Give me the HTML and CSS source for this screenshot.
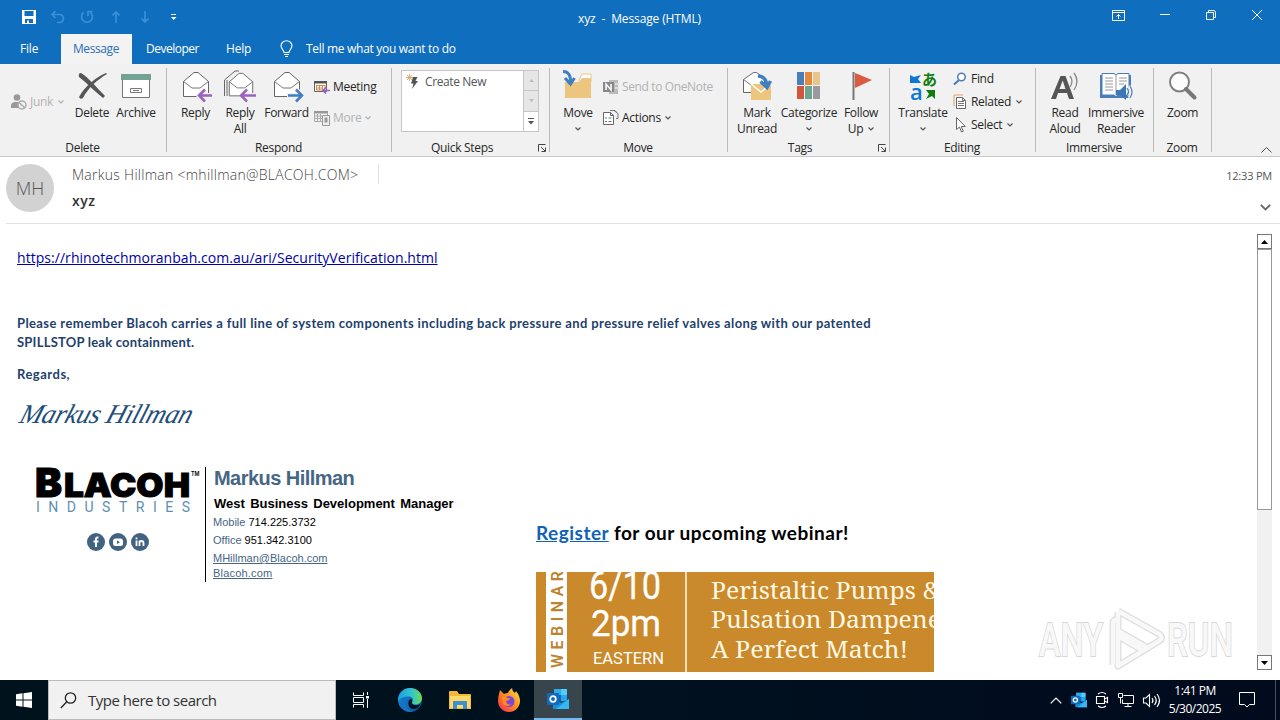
FILE: index.html
```html
<!DOCTYPE html>
<html lang="en">
<head>
<meta charset="utf-8">
<title>xyz - Message (HTML)</title>
<link rel="stylesheet" href="styles.css">
</head>
<body>
<svg class="defs" width="0" height="0">
  <symbol id="chev" viewBox="0 0 6 4"><path d="M.5.5 3 3 5.500.5" fill="none" stroke="currentColor" stroke-width="1.2"/></symbol>
  <symbol id="launch" viewBox="0 0 8 8"><path d="M.5 7.500V.5H7.500M3 3l4 4M7.500 3.500v4h-4" fill="none" stroke="#444"/></symbol>
  <symbol id="env" viewBox="0 0 32 32"><path d="M3.500 11.500v15h25v-15L18 2.500h-4z" fill="#fff" stroke="#666"/><path d="M3.500 11.500 12 18h8l8.500-6.500" fill="none" stroke="#777"/></symbol>
  <symbol id="outlook" viewBox="0 0 22 22"><path d="M7 1h13v12H7z" fill="#1066b5"/><path d="M7 1h7v6H7z" fill="#32a9e8"/><path d="M14 1h6v6h-6z" fill="#50d0f8"/><path d="M14 7h6v6h-6z" fill="#28a8ea"/><path d="M6 12l8 3 8-4v10H6z" fill="#1490df"/><path d="M22 11v10H9z" fill="#35b8f1"/><rect y="5" width="12" height="12" rx="1" fill="#0f6cbd"/><circle cx="6" cy="11" r="2.800" fill="none" stroke="#fff" stroke-width="1.700"/></symbol>
</svg>

<header class="titlebar">
  <div class="quick">
    <svg width="16" height="16" viewBox="0 0 16 16"><path d="M1 1h14v14H1z" fill="#fff"/><path d="M3.500 2h9v5h-9zM4 10h8v4H4z" fill="#106ebe"/><path d="M6 11.500h2V14H6z" fill="#fff"/></svg>
    <svg class="dim" width="16" height="16" viewBox="0 0 16 16"><path d="M5.500 2 2 5.500 5.500 9M2 5.500h7.500a4 4 0 0 1 0 8H7"/></svg>
    <svg class="dim" width="16" height="16" viewBox="0 0 16 16"><path d="M4.500 3.500A5.500 5.500 0 1 0 11.500 3.500M13.500 2.500H9V7"/></svg>
    <svg class="dim" width="16" height="16" viewBox="0 0 16 16"><path d="M8 14V3M4.500 6.500 8 3l3.500 3.500"/></svg>
    <svg class="dim" width="16" height="16" viewBox="0 0 16 16"><path d="M8 2v11M4.500 9.500 8 13l3.500-3.500"/></svg>
    <svg width="16" height="16" viewBox="0 0 16 16"><path d="M5 5.500h5" stroke="#fff"/><path d="M5 8h5.500L7.700 11z" fill="#fff"/></svg>
  </div>
  <div class="title">xyz&nbsp; - &nbsp;Message (HTML)</div>
  <div class="controls">
    <svg width="13" height="11" viewBox="0 0 13 11"><path d="M.5.5h12v10H.5zM.5 2.500h12M6.500 9V4.500M4.500 6.500l2-2 2 2"/></svg>
    <svg width="10" height="11" viewBox="0 0 10 11"><path d="M-1 4.500h10"/></svg>
    <svg width="10" height="11" viewBox="0 0 10 11"><path d="M.5 2.500h7v7h-7zM2.500 2.500v-2h5q2 0 2 2v5h-2"/></svg>
    <svg width="11" height="11" viewBox="0 0 11 11"><path d="M0 0l10 10M10 0L0 10"/></svg>
  </div>
</header>

<nav class="tabs">
  <span class="tab file">File</span>
  <span class="tab active">Message</span>
  <span class="tab dev">Developer</span>
  <span class="tab help">Help</span>
  <svg class="bulb" width="13" height="18" viewBox="0 0 13 18"><path d="M4 12.500C4 10 1 9 1 5.800a5.500 5 0 0 1 11 0C12 9 9 10 9 12.500zM4 14.500h5M5 16.500h3" fill="none" stroke="#fff" stroke-width="1.100"/></svg>
  <span class="tell">Tell me what you want to do</span>
</nav>

<section class="ribbon">
  <div class="group g-delete">
    <div class="tools">
      <div class="junk disabled"><svg width="16" height="16" viewBox="0 0 16 16"><circle cx="6" cy="3.500" r="3.300" fill="#999"/><path d="M0 14V11q1-3 4-3h4v6z" fill="#999"/><circle cx="11" cy="11" r="4" fill="#f1f1f1" stroke="#aaa" stroke-width="1.500"/><path d="M8 8.500l6 5.500" stroke="#aaa" stroke-width="1.500"/></svg><span>Junk</span><svg class="chev" width="6" height="4"><use href="#chev"/></svg></div>
      <div class="big w44"><svg width="32" height="32" viewBox="0 0 32 32"><path d="M5 3c7 4 15 14 24 23l-2 2C18 21 11 13 3 7q-1-4 2-4z" fill="#555"/><path d="M31 4C21 10 12 18 7 28q-3 2-4-1C9 16 20 7 30 3z" fill="#555"/></svg><span>Delete</span></div>
      <div class="big w44"><svg width="32" height="32" viewBox="0 0 32 32"><path d="M2.500 8.500h27v19h-27z" fill="#fff" stroke="#777"/><path d="M1 4h30v6H1z" fill="#72a394"/><path d="M10.500 18.500h11v4h-11z" fill="#fff" stroke="#777"/><path d="M13 20.500h6" stroke="#777"/></svg><span>Archive</span></div>
    </div>
    <div class="caption">Delete</div>
  </div>
  <div class="group g-respond">
    <div class="tools">
      <div class="big w45"><svg width="32" height="32" viewBox="0 0 32 32"><use href="#env" width="32" height="32"/><path d="M33 25.500H20M25 19.500l-6 6 6 6" fill="none" stroke="#f1f1f1" stroke-width="5"/><path d="M32 25.500H19.500M25 19.500l-6 6 6 6" fill="none" stroke="#9a63bd" stroke-width="2.500"/></svg><span>Reply</span></div>
      <div class="big w44"><svg width="32" height="32" viewBox="0 0 32 32"><path d="M.5 26V10L11 1h4M3 26V10" fill="none" stroke="#666"/><use href="#env" x="2" width="30" height="32"/><path d="M33 25.500H20M25 19.500l-6 6 6 6" fill="none" stroke="#f1f1f1" stroke-width="5"/><path d="M32 25.500H17.500M23 19.500l-6 6 6 6" fill="none" stroke="#9a63bd" stroke-width="2.500"/></svg><span>Reply<br>All</span></div>
      <div class="big w49 fwd"><svg width="32" height="32" viewBox="0 0 32 32"><use href="#env" width="32" height="32"/><path d="M16 25.500H29M25 19.500l6 6-6 6" fill="none" stroke="#f1f1f1" stroke-width="5"/><path d="M17 25.500H30M25 19.500l6 6-6 6" fill="none" stroke="#3f7fc1" stroke-width="2.500"/></svg><span>Forward</span></div>
      <div class="smalls two">
        <div class="small"><svg width="16" height="14" viewBox="0 0 16 14"><path d="M.5 1.500h12v10H.5z" fill="#fff" stroke="#666"/><path d="M0 1h13v2.500H0z" fill="#555"/><path d="M2.500 5v5M5.500 5v5M8.500 5v5M11 5v3M2 5.500h9M2 8h7M2 10h6" stroke="#d08a4d"/><path d="M16 10.500H9M12 7.500l-3 3 3 3" fill="none" stroke="#9a63bd" stroke-width="1.700"/></svg><span>Meeting</span></div>
        <div class="small disabled"><svg width="16" height="16" viewBox="0 0 16 16"><path d="M.5 2.500h13v9H.5zM3.500 4v7M6.500 4v7M1 6h7M1 8.500h7" fill="none" stroke="#aaa"/><path d="M0 1h14v2.500H0z" fill="#999"/><path d="M8.500 5.500h7v10h-7z" fill="#eee" stroke="#999"/><path d="M10.500 7.500h3v5h-3z" fill="#999"/></svg><span>More</span><svg class="chev" width="6" height="4"><use href="#chev"/></svg></div>
      </div>
    </div>
    <div class="caption">Respond</div>
  </div>
  <div class="group g-quick">
    <div class="tools">
      <div class="gallery">
        <div class="step"><svg width="14" height="16" viewBox="0 0 14 16"><path d="M3.500 0v7M0 3.500h7M1 1l5 5M6 1 1 6" stroke="#dba968" stroke-width=".9"/><path d="M7 3h4.500L9.500 7H12l-6 8 1.500-5.500H5z" fill="#555"/></svg><span>Create New</span></div>
        <div class="spin"><i class="off"><svg width="5" height="3" viewBox="0 0 5 3"><path d="M0 3 2.500 0 5 3z" fill="#bbb"/></svg></i><i class="off"><svg width="5" height="3" viewBox="0 0 5 3"><path d="M0 0 2.500 3 5 0z" fill="#bbb"/></svg></i><i><svg width="6" height="7" viewBox="0 0 6 7"><path d="M0 .5h6" stroke="#555"/><path d="M0 3h6L3 6.500z" fill="#555"/></svg></i></div>
      </div>
    </div>
    <div class="caption">Quick Steps</div><svg class="launch" width="8" height="8"><use href="#launch"/></svg>
  </div>
  <div class="group g-move">
    <div class="tools">
      <div class="big w42"><svg width="32" height="32" viewBox="0 0 32 32"><path d="M17 10l3-6h9v8H17z" fill="#fff" stroke="#e9c580"/><path d="M3 12h14l3-4h9v20H3z" fill="#ecc67f"/><path d="M1 1.500q8 0 7.500 11M3 8l5.500 6 4-6" fill="none" stroke="#3f7fc1" stroke-width="3"/></svg><span>Move</span><svg class="chev" width="6" height="4"><use href="#chev"/></svg></div>
      <div class="smalls two">
        <div class="small disabled"><svg width="16" height="16" viewBox="0 0 16 16"><path d="M6 1h9v14H6z" fill="#bbb"/><path d="M12 4h4v2h-4zM12 8h4v2h-4z" fill="#ddd"/><path d="M0 3h11v10H0z" fill="#888"/><path d="M3 11V5l5 6V5" fill="none" stroke="#fff" stroke-width="1.500"/></svg><span class="onenote">Send to OneNote</span></div>
        <div class="small"><svg width="16" height="16" viewBox="0 0 16 16"><path d="M.5 2.500h7l3 3v9H.5zM7.500 2.500v3h3" fill="#fff" stroke="#666"/><path d="M2 8h2M2 11.500h2M5.500 8h3M5.500 11.500h3M7 .5h4q2 0 2.500 2M11 .5l4 3v5h-2" fill="none" stroke="#777"/></svg><span>Actions</span><svg class="chev" width="6" height="4"><use href="#chev"/></svg></div>
      </div>
    </div>
    <div class="caption">Move</div>
  </div>
  <div class="group g-tags">
    <div class="tools">
      <div class="big w44"><svg width="32" height="32" viewBox="0 0 32 32"><path d="M2.500 22.500v-13l10-7h3l8 6v14z" fill="#fff" stroke="#666"/><path d="M2.500 9.500l8 6h6" fill="none" stroke="#777"/><path d="M10 14h20v16H10z" fill="#ecc67f"/><path d="M10 14l10 8 10-8" fill="none" stroke="#fff" stroke-width="1.500"/><path d="M17 6q8 0 9 10M19.500 11.500l6.500 6 3.500-6.500" fill="none" stroke="#3f7fc1" stroke-width="3.500"/></svg><span>Mark<br>Unread</span></div>
      <div class="big w60"><svg width="32" height="32" viewBox="0 0 32 32"><path d="M4 2h7v13H4z" fill="#4a7ebb"/><path d="M12 2h7v13h-7z" fill="#e58a3c"/><path d="M20 2h7v13h-7z" fill="#e8c68b"/><path d="M4 16h7v13H4z" fill="#d2553e"/><path d="M12 16h7v13h-7z" fill="#6ba592"/><path d="M20 16h7v13h-7z" fill="#9a9a9e"/></svg><span>Categorize</span><svg class="chev" width="6" height="4"><use href="#chev"/></svg></div>
      <div class="big w44"><svg width="32" height="32" viewBox="0 0 32 32"><path d="M8.500 2v28" stroke="#777" stroke-width="2"/><path d="M10 3l17 7-17 8z" fill="#dc5a42"/></svg><span>Follow<br>Up <svg class="chev in" width="6" height="4"><use href="#chev"/></svg></span></div>
    </div>
    <div class="caption">Tags</div><svg class="launch" width="8" height="8"><use href="#launch"/></svg>
  </div>
  <div class="group g-edit">
    <div class="tools">
      <div class="big w48"><div class="translate"><b>a</b><em>あ</em><svg width="32" height="32" viewBox="0 0 32 32"><path d="M3 5l4 2 7-2-3 4 3 4H3z" fill="#0c78d4"/><path d="M19 20h9v9l-3-3-6 3 3-5z" fill="#107c10"/></svg></div><span>Translate</span><svg class="chev" width="6" height="4"><use href="#chev"/></svg></div>
      <div class="smalls three">
        <div class="small"><svg width="14" height="14" viewBox="0 0 14 14"><circle cx="8.500" cy="5" r="3.800" fill="#fff" stroke="#4a7ebb" stroke-width="1.500"/><path d="M6 8l-5 4.500" stroke="#4a7ebb" stroke-width="2.200"/></svg><span>Find</span></div>
        <div class="small"><svg width="14" height="16" viewBox="0 0 14 16"><path d="M1 12V1h9" fill="none" stroke="#dfa46a"/><path d="M3.500 3.500h6l3 3v8h-9z" fill="#fff" stroke="#666"/><path d="M5 7.500h6M5 9.500h6M5 11.500h6M9.500 3.500v3h3" stroke="#777" fill="none"/></svg><span>Related</span><svg class="chev" width="6" height="4"><use href="#chev"/></svg></div>
        <div class="small"><svg width="14" height="16" viewBox="0 0 14 16"><path d="M3.500.5v12l3-2.500 2 5 1.800-.8-2-4.700h4z" fill="#fff" stroke="#666"/></svg><span>Select</span><svg class="chev" width="6" height="4"><use href="#chev"/></svg></div>
      </div>
    </div>
    <div class="caption">Editing</div>
  </div>
  <div class="group g-imm">
    <div class="tools">
      <div class="big w46"><svg width="32" height="32" viewBox="0 0 32 32"><path fill-rule="evenodd" d="M2 29 11.500 6h5L25 29h-5l-2-6H9l-2 6zM10.500 19h6L13.700 10.500z" fill="#555"/><path d="M21 6q4 5 0 11M25 3q6 8 0 17" fill="none" stroke="#888" stroke-width="1.300"/></svg><span>Read<br>Aloud</span></div>
      <div class="big w56"><svg width="32" height="32" viewBox="0 0 32 32"><path d="M0 5h31v23H0z" fill="#4a7ebb"/><path d="M2 3.500h12l2 1.500 2-1.500h11V25H18l-2 2-2-2H2z" fill="#fff" stroke="#4a7ebb"/><path d="M16 5v21M5 8h8M5 11h8M5 14h8M5 17h8M5 20h8M19 8h8M19 11h8M19 14h5" stroke="#999"/><path d="M16 20h4l6-6v16l-6-5h-4z" fill="#3d78b5"/><path d="M27 19q3 3 0 6M29 16q5 6 0 12" stroke="#f1f1f1" stroke-width="3" fill="none"/><path d="M27 18q3 4 0 7M30 16q4 6 0 12" stroke="#4a7ebb" stroke-width="1.200" fill="none"/></svg><span>Immersive<br>Reader</span></div>
    </div>
    <div class="caption">Immersive</div>
  </div>
  <div class="group g-zoom">
    <div class="tools">
      <div class="big w57"><svg width="32" height="32" viewBox="0 0 32 32"><circle cx="12.500" cy="12" r="9.500" fill="#fcfcfc" stroke="#808080" stroke-width="2"/><path d="M19 19l8.500 8.500" stroke="#777" stroke-width="4" stroke-linecap="round"/></svg><span>Zoom</span></div>
    </div>
    <div class="caption">Zoom</div>
  </div>
  <svg class="collapse" width="11" height="6" viewBox="0 0 11 6"><path d="M.5 5.500l5-5 5 5" fill="none" stroke="#555"/></svg>
</section>

<section class="head">
  <div class="avatar">MH</div>
  <div class="who"><div class="from"><span>Markus Hillman &lt;mhillman@BLACOH.COM&gt;</span></div><div class="subject">xyz</div></div>
  <div class="when"><span>12:33 PM</span><svg width="11" height="7" viewBox="0 0 11 7"><path d="M.8.8l4.700 4.700L10.200.8" fill="none" stroke="#666" stroke-width="1.800"/></svg></div>
</section>

<main class="message">
  <div class="content">
    <a class="link">https://rhinotechmoranbah.com.au/ari/SecurityVerification.html</a>
    <p class="note"><span class="l1">Please remember Blacoh carries a full line of system components including back pressure and pressure relief valves along with our patented</span><br><span class="l2">SPILLSTOP leak containment.</span></p>
    <p class="regards">Regards,</p>
    <div class="script">Markus Hillman</div>
    <div class="sig">
      <div class="brand">
        <svg width="170" height="50" viewBox="0 0 170 50">
          <g font-family="Inter" font-weight="900" stroke="#000" stroke-width="1"><text x="-1" y="30" font-size="40" textLength="27" lengthAdjust="spacingAndGlyphs">B</text><text x="28" y="30" font-size="33" textLength="126" lengthAdjust="spacingAndGlyphs">LACOH</text></g>
          <text x="155" y="9" font-family="Inter" font-size="6.500" font-weight="600" textLength="8.500" lengthAdjust="spacingAndGlyphs">TM</text>
          <text x="0" y="45" font-family="Roboto" font-size="14" fill="#5c8fb3" textLength="154">INDUSTRIES</text>
        </svg>
        <div class="social">
          <svg width="18" height="18" viewBox="0 0 18 18"><circle cx="9" cy="9" r="9" fill="#416280"/><path d="M11.500 4.500h-1Q9 4.500 9 6.200V14M6.500 8.500h5" fill="none" stroke="#fff" stroke-width="1.900"/></svg>
          <svg width="18" height="18" viewBox="0 0 18 18"><circle cx="9" cy="9" r="9" fill="#416280"/><rect x="4" y="5.500" width="10" height="7.500" rx="2.500" fill="#fff"/><path d="M8 7.500l3 1.700-3 1.700z" fill="#416280"/></svg>
          <svg width="18" height="18" viewBox="0 0 18 18"><circle cx="9" cy="9" r="9" fill="#416280"/><path d="M5.500 7.500V13M5.500 4.500v1.700M8.500 13V7.500M8.500 10q0-2 2-2t2 2v3" fill="none" stroke="#fff" stroke-width="1.800"/></svg>
        </div>
      </div>
      <div class="card">
        <div class="name">Markus Hillman</div>
        <div class="role">West Business Development Manager</div>
        <div class="row">Mobile <b>714.225.3732</b></div>
        <div class="row">Office <b>951.342.3100</b></div>
        <div class="row mail"><u>MHillman@Blacoh.com</u></div>
        <div class="row site"><u>Blacoh.com</u></div>
      </div>
      <div class="webinar">
        <div class="register"><u>Register</u> for our upcoming webinar!</div>
        <svg class="banner" width="398" height="100" viewBox="0 0 398 100">
          <path d="M0 0h398v100H0z" fill="#ca892a"/><path d="M10 0h21v100H10z" fill="#fff"/><path d="M150 0v100" stroke="#fff" stroke-width="1.400"/>
          <text transform="translate(27 96) rotate(-90)" font-family="Roboto" font-weight="600" font-size="16" fill="#bd842f" textLength="97">WEBINAR</text>
          <g fill="#fff" stroke="#fff" stroke-width=".3" font-family="Roboto"><text x="53" y="27" font-size="38" textLength="72" lengthAdjust="spacingAndGlyphs">6/10</text><text x="55" y="64" font-size="37" textLength="70" lengthAdjust="spacingAndGlyphs">2pm</text><text x="57" y="92" font-size="17" stroke="none" textLength="71" lengthAdjust="spacingAndGlyphs">EASTERN</text></g>
          <g fill="#fff8e4" font-family="'Noto Serif','DejaVu Serif'" font-size="24"><text x="175" y="27" textLength="205" lengthAdjust="spacingAndGlyphs">Peristaltic Pumps</text><text x="387" y="27">&amp;</text><text x="175" y="56" textLength="253" lengthAdjust="spacingAndGlyphs">Pulsation Dampeners</text><text x="175" y="86" textLength="197" lengthAdjust="spacingAndGlyphs">A Perfect Match!</text></g>
        </svg>
      </div>
    </div>
  </div>
  <div class="scroll"><i><svg width="7" height="4" viewBox="0 0 7 4"><path d="M0 4 3.500 0 7 4z"/></svg></i><div class="thumb"></div><i class="down"><svg width="7" height="4" viewBox="0 0 7 4"><path d="M0 0 3.500 4 7 0z"/></svg></i></div>
  <svg class="watermark" width="204" height="70" viewBox="0 0 204 70"><g fill="none" stroke-linejoin="round"><g stroke="#dcdcdc" stroke-width="7"><path d="M77 59V17q0-3 5-4v42M82 5l41 23q5 4 0 7L82 60V30l24 14M82 6v19l30 17"/></g><g stroke="#f8f8f8" stroke-width="4.500"><path d="M77 59V17q0-3 5-4v42M82 5l41 23q5 4 0 7L82 60V30l24 14M82 6v19l30 17"/></g></g><g font-family="Roboto" font-weight="500" font-size="46" fill="#f8f8f8" stroke="#d6d6d6" stroke-width="1.800" paint-order="stroke"><text x="3" y="50" textLength="64" lengthAdjust="spacingAndGlyphs">ANY</text><text x="131" y="50" textLength="66" lengthAdjust="spacingAndGlyphs">RUN</text></g></svg>
</main>

<footer class="taskbar">
  <div class="start"><svg width="16" height="16" viewBox="0 0 16 16"><path d="M0 2.200 6.500 1.300V7.500H0zM7.500 1.200 16 0v7.500H7.500zM0 8.500h6.500v6.200L0 13.800zM7.500 8.500H16V16l-8.500-1.200z" fill="#fff"/></svg></div>
  <div class="search"><svg width="17" height="17" viewBox="0 0 17 17"><circle cx="10.500" cy="6" r="5.200" fill="none" stroke="#222" stroke-width="1.300"/><path d="M6.800 9.800.8 16" stroke="#222" stroke-width="1.300"/></svg><span>Type here to search</span></div>
  <div class="app"><svg width="16" height="16" viewBox="0 0 16 16"><path d="M.5 3.500V.5M10.500 3.500V.5M.5 3.500h10M.5 5.500h10v5H.5zM.5 12.500h10M.5 15.500v-3M10.500 15.500v-3M14.500 0v3M14.500 7v9" stroke="#fff" fill="none"/><path d="M13 4h3v2.500h-3z" fill="#fff"/></svg></div>
  <div class="app edge"><svg width="24" height="24" viewBox="0 0 24 24"><defs><linearGradient id="e1" x2="1"><stop stop-color="#1e9be0"/><stop offset=".55" stop-color="#32c3d0"/><stop offset="1" stop-color="#6bdc50"/></linearGradient><linearGradient id="e2" y2="1"><stop stop-color="#1790dc"/><stop offset="1" stop-color="#0b4c9b"/></linearGradient></defs><circle cx="12" cy="12" r="12" fill="url(#e2)"/><path d="M0 11C1 4 6 0 12 0c7 0 12 5 12 10 0 4-3 6.500-6.500 6.500-3 0-4-1.500-3-3 1.500-3-1-5-4-5C6 8.500 1 10 0 14z" fill="url(#e1)"/><path d="M10 9c-5 4-3 13 5 14.600C8 25 2 20 2.500 14 3 10 6 8.500 10 9z" fill="#1473c4"/><path d="M13.500 15c1 2.500 6 3 9 1-1 3-4 5-7 5-5 0-7-7-3-10 2 0 2 2 1 4z" fill="#00131c"/></svg></div>
  <div class="app"><svg width="22" height="20" viewBox="0 0 22 20"><path d="M0 2q0-1 1-1h7l2 3h11q1 0 1 1v14H0z" fill="#f4b93b"/><path d="M1 6h20v12H1z" fill="#ffd968"/><path d="M4 11h14v8h-4v-4H8v4H4z" fill="#3c8fd4"/></svg></div>
  <div class="app"><svg width="24" height="24" viewBox="0 0 24 24"><defs><linearGradient id="f" x1="1" x2="0" y2="1"><stop stop-color="#ffe14a"/><stop offset=".5" stop-color="#ff8a1e"/><stop offset="1" stop-color="#f3205c"/></linearGradient></defs><path d="M2 6l1-4 4 4q2-1 4-1 1-3 4-5 0 3 3 5l1-2q4 5 4 10a11 11 0 0 1-22 0q0-4 1-7z" fill="url(#f)"/><circle cx="12" cy="13.500" r="5.500" fill="#7b45d8"/><path d="M5 9q4-1 5 1 3 0 3 1-2 2-4 2 1 5 6 3-5 4-9 0z" fill="#ff8a1e"/></svg></div>
  <div class="app current"><svg width="24" height="22"><use href="#outlook" width="24" height="22"/></svg></div>
  <div class="tray">
    <svg width="12" height="7" viewBox="0 0 12 7"><path d="M.7 6.300 6 1l5.300 5.300" fill="none" stroke="#fff" stroke-width="1.200"/></svg>
    <svg width="16" height="16"><use href="#outlook" width="16" height="16"/></svg>
    <svg width="14" height="18" viewBox="0 0 14 18"><path d="M3 3q4-3 8 0M3 15q4 3 8 0M1.500 5.500h8v7h-8zM9.500 8l3-1.500v5L9.500 10" fill="none" stroke="#fff" stroke-width="1.100"/></svg>
    <svg width="17" height="15" viewBox="0 0 17 15"><path d="M5.500 2.500h10v8H4.500v-4M10 10.500v3M6.500 13.500h7M.5.5h4v4h-4zM2.500 4.500v6" fill="none" stroke="#fff"/></svg>
    <svg width="17" height="15" viewBox="0 0 17 15"><path d="M.5 5h2.500l3.500-3.500v12L3 10H.5zM9 5q2 2.500 0 5M11.500 3q3.500 4.500 0 9M14 1q5 6.500 0 13" fill="none" stroke="#fff" stroke-width="1.100"/></svg>
  </div>
  <div class="clock"><span>1:41 PM</span><span class="date">5/30/2025</span></div>
  <svg class="bell" width="16" height="16" viewBox="0 0 16 16"><path d="M.5.500h15v12h-5L8 15l-2.500-2.500h-5z" fill="none" stroke="#fff"/></svg>
  <i class="desk"></i>
</footer>
</body>
</html>
```
FILE: styles.css
```css
* { box-sizing: border-box; }
body { margin: 0; width: 1280px; height: 720px; overflow: hidden; background: #fff; font: 12px/16px "Open Sans", "Noto Sans", sans-serif; color: #262626; display: flex; flex-direction: column; white-space: nowrap; }
svg { display: block; flex: none; overflow: visible; }
i { font-style: normal; }
p { margin: 0; }
.defs { position: absolute; }

.titlebar { height: 34px; flex: none; background: #106ebe; color: #fff; display: grid; grid-template-columns: 200px 1fr 200px; align-items: center; }
.quick { display: flex; gap: 13px; padding-left: 21px; }
.dim { fill: none; stroke: #3a8fd8; stroke-width: 1.700; }
.title { text-align: center; padding: 3px 1px 0 0; letter-spacing: -.13px; }
.controls { display: flex; justify-content: space-between; align-items: center; padding: 0 17px 4px 32px; fill: none; stroke: #fff; }

.tabs { height: 30px; flex: none; background: #106ebe; color: #fff; display: flex; align-items: stretch; line-height: 30px; }
.file { width: 61px; padding-left: 20px; letter-spacing: -.2px; }
.active { width: 71px; padding-right: 1px; text-align: center; background: #f3f3f3; color: #2a6fb5; letter-spacing: -.4px; }
.dev { width: 80px; padding-left: 14px; letter-spacing: -.5px; }
.help { width: 68px; padding-left: 14px; letter-spacing: -.2px; }
.bulb { margin-top: 6px; }
.tell { margin-left: 13px; letter-spacing: -.3px; }

.ribbon { height: 93px; flex: none; background: #f1f1f1; border-bottom: 1px solid #c8c8c8; display: flex; position: relative; letter-spacing: -.3px; }
.group { position: relative; height: 92px; display: flex; flex-direction: column; }
.group::after { content: ""; position: absolute; right: 0; top: 4px; width: 1px; height: 84px; background: #bbb; }
.tools { height: 76px; display: flex; align-items: flex-start; }
.caption { text-align: center; line-height: 16px; padding-right: 2px; }
.g-delete { width: 167px; }
.g-respond { width: 225px; }
.g-quick { width: 158px; }
.g-move { width: 178px; }
.g-tags { width: 162px; }
.g-edit { width: 146px; }
.g-imm { width: 118px; }
.g-zoom { width: 58px; }
.g-respond .tools { padding-left: 6px; }
.g-move .tools { padding-left: 7px; }
.g-tags .tools { padding-left: 7px; }
.g-edit .tools { padding-left: 9px; }
.g-imm .tools { padding-left: 6px; }
.g-quick .caption { padding-right: 18px; }
.g-tags .caption { padding-right: 18px; }
.big { display: flex; flex-direction: column; align-items: center; padding-top: 6px; text-align: center; }
.big > span { margin-top: 3px; }
.big > .chev { margin-top: 6px; }
.w42 { width: 42px; } .w44 { width: 44px; } .w45 { width: 45px; } .w46 { width: 46px; } .w48 { width: 48px; } .w49 { width: 49px; } .w56 { width: 56px; } .w57 { width: 57px; } .w60 { width: 60px; }
.chev { color: #555; }
.chev.in { display: inline-block; margin: 0 0 2px 2px; }
.junk { width: 70px; padding: 30px 0 0 11px; display: flex; align-items: center; gap: 3px; }
.junk .chev { margin-left: 2px; }
.disabled, .disabled .chev { color: #b1b1b1; }
.smalls { display: flex; flex-direction: column; padding-left: 5px; }
.small { display: flex; align-items: center; gap: 3px; height: 16px; }
.small .chev { margin-left: 1px; }
.two { padding-top: 15px; gap: 15px; }
.three { padding-top: 7px; gap: 7px; padding-left: 6px; }
.three .small { gap: 4px; }
.g-respond .two { padding-left: 3px; }
.g-move .two { padding-left: 4px; }
.onenote { letter-spacing: -.37px; }
.gallery { width: 138px; height: 62px; margin: 6px 0 0 9px; border: 1px solid #c6c6c6; background: #fff; display: flex; justify-content: space-between; }
.step { display: flex; gap: 5px; padding: 3px 0 0 4px; height: 20px; color: #555; letter-spacing: -.4px; }
.spin { width: 15px; border-left: 1px solid #c6c6c6; display: flex; flex-direction: column; }
.spin i { flex: 1; display: flex; align-items: center; justify-content: center; }
.spin .off { background: #e6e6e6; border-bottom: 1px solid #c6c6c6; }
.launch { position: absolute; right: 4px; bottom: 4px; }
.translate { position: relative; width: 32px; height: 32px; }
.translate b { position: absolute; left: 3px; top: 11px; font: 600 22px/20px "Open Sans", sans-serif; color: #0c78d4; }
.translate em { position: absolute; left: 15px; top: 1px; font: 700 15px/16px "Noto Sans CJK JP", sans-serif; color: #107c10; }
.collapse { position: absolute; right: 8px; bottom: 3px; }

.head { height: 67px; flex: none; margin: 0 0 0 6px; border-bottom: 1px solid #e1e1e1; display: flex; padding-top: 7px; }
.avatar { width: 48px; height: 48px; border-radius: 50%; background: #d2d2d2; color: #555; font-size: 18px; line-height: 49px; text-align: center; font-weight: 300; }
.who { margin-left: 18px; }
.from { font-size: 14px; line-height: 22px; color: #444; font-weight: 300; width: 307px; border-right: 1px solid #e1e1e1; height: 20px; letter-spacing: .27px; }
.subject { font-size: 14px; font-weight: 600; line-height: 20px; margin-top: 7px; color: #333; letter-spacing: .5px; }
.when { margin-left: auto; padding: 4px 8px 0 0; display: flex; flex-direction: column; align-items: flex-end; gap: 20px; font-size: 11px; color: #555; letter-spacing: -.2px; }
.when svg { margin-right: 1px; }

.message { height: 456px; flex: none; position: relative; display: flex; justify-content: space-between; }
.content { padding: 24px 0 0 17px; }
.link { display: block; width: max-content; font-size: 14px; line-height: 20px; color: #0000a8; text-decoration: underline; letter-spacing: .045px; }
.note { margin-top: 46px; font: 700 13px/19px "Lato", "Open Sans", sans-serif; color: #1f3f6e; }
.l1 { letter-spacing: .39px; }
.l2 { letter-spacing: .22px; }
.regards { margin-top: 13px; font: 700 13px/19px "Lato", sans-serif; color: #1f3f6e; letter-spacing: .5px; }
.script { font: italic 27px/40px "Liberation Serif", serif; color: #1f4e79; margin: 10px 0 0 4px; width: max-content; transform: skewX(-18deg); letter-spacing: -.45px; }
.sig { display: flex; margin: 33px 0 0 19px; }
.brand { width: 170px; height: 115px; border-right: 1px solid #000; }
.social { display: flex; gap: 4px; padding: 16px 0 0 51px; }
.card { padding-left: 7px; width: 330px; font-family: "Liberation Sans", Arial, sans-serif; color: #466684; }
.name { font-size: 20px; font-weight: 700; line-height: 22px; letter-spacing: -.55px; padding-left: 1px; }
.role { font-size: 13px; font-weight: 700; line-height: 20px; margin: 5px 0 -1px 1px; color: #000; word-spacing: 1.700px; }
.row { font-size: 11px; line-height: 18px; }
.row b { color: #000; font-weight: 400; }
.site { line-height: 13px; letter-spacing: .2px; }
.register { font: 700 19px/28px "Lato", sans-serif; color: #000; margin-top: 52px; letter-spacing: .5px; }
.register u { color: #1062b8; }
.banner { margin-top: 25px; overflow: hidden; }
.scroll { width: 15px; height: 436px; margin: 10px 8px 0 0; background: #f1f1f1; display: flex; flex-direction: column; }
.scroll i { height: 15px; border: 1px solid #777; background: #fff; display: flex; align-items: center; justify-content: center; }
.thumb { height: 261px; border: 1px solid #999; background: #fff; }
.down { margin-top: auto; }
.watermark { position: absolute; left: 1036px; top: 382px; }

.taskbar { height: 40px; flex: none; background: linear-gradient(90deg, #00131c, #00101f 60%, #020a1e); display: flex; align-items: center; color: #fff; }
.start { width: 48px; display: flex; justify-content: center; }
.search { width: 288px; height: 40px; background: #f1f1f1; border: 1px solid #bbb; display: flex; align-items: center; padding-left: 11px; gap: 11px; font-size: 15px; color: #333; letter-spacing: -.5px; }
.app { width: 49.500px; height: 40px; display: flex; align-items: center; justify-content: center; }
.current { width: 48px; background: #39454d; border-bottom: 2px solid #76b9ed; }
.tray { margin-left: auto; display: flex; align-items: center; gap: 8.500px; }
.clock { width: 66px; margin-left: 2px; text-align: center; display: flex; flex-direction: column; line-height: 18px; letter-spacing: -.5px; padding-bottom: 1px; }
.bell { margin-left: 11px; }
.desk { width: 1px; height: 40px; background: #44505c; margin: 0 4px 0 20px; }
```
